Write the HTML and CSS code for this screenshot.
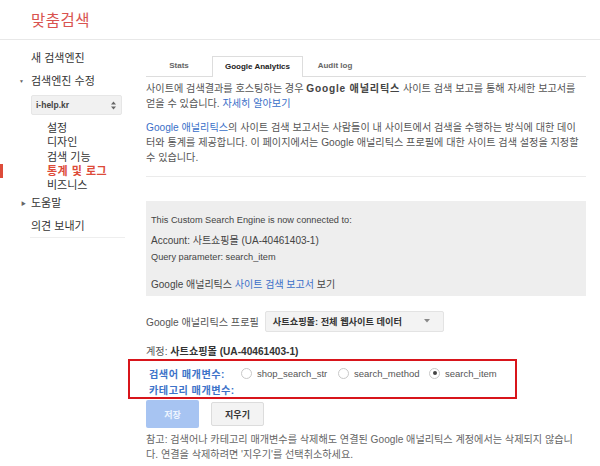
FILE: index.html
```html
<!DOCTYPE html>
<html lang="ko">
<head>
    <meta charset="UTF-8">
    <title>맞춤검색</title>
    <link rel="stylesheet" href="styles.css">
</head>
<body>
<div class="header">
    <span class="logo">맞춤검색</span>
</div>
<div class="page">
    <div class="sidebar">
        <div class="nav-item">새 검색엔진</div>
        <div class="nav-item"><span class="arrow">▼</span>검색엔진 수정</div>
        <div class="engine-select">
            <span>i-help.kr</span>
            <svg width="5" height="9" viewBox="0 0 5 9"><path d="M0 3.5 L2.5 0.5 L5 3.5 Z M0 5.5 L2.5 8.5 L5 5.5 Z" fill="#666"/></svg>
        </div>
        <div class="sub-list">
            <div class="sub-item">설정</div>
            <div class="sub-item">디자인</div>
            <div class="sub-item">검색 기능</div>
            <div class="sub-item active">통계 및 로그</div>
            <div class="sub-item">비즈니스</div>
        </div>
        <div class="nav-item"><span class="arrow right">▶</span>도움말</div>
        <div class="nav-item feedback">의견 보내기</div>
    </div>
    <div class="main">
        <div class="tabs">
            <div class="tab t1">Stats</div>
            <div class="tab t2 selected">Google Analytics</div>
            <div class="tab t3">Audit log</div>
        </div>
        <p class="intro">사이트에 검색결과를 호스팅하는 경우 <b>Google 애널리틱스</b> 사이트 검색 보고를 통해 자세한 보고서를 얻을 수 있습니다. <a href="#">자세히 알아보기</a></p>
        <p class="intro second"><a href="#">Google 애널리틱스</a>의 사이트 검색 보고서는 사람들이 내 사이트에서 검색을 수행하는 방식에 대한 데이터와 통계를 제공합니다. 이 페이지에서는 Google 애널리틱스 프로필에 대한 사이트 검색 설정을 지정할 수 있습니다.</p>
        <div class="divider"></div>
        <div class="connected">
            <div class="c-line latin first">This Custom Search Engine is now connected to:</div>
            <div class="c-line">Account: 사트쇼핑몰 (UA-40461403-1)</div>
            <div class="c-line latin">Query parameter: search_item</div>
            <div class="c-line last">Google 애널리틱스 <a href="#">사이트 검색 보고서</a> 보기</div>
        </div>
        <div class="profile-row">
            <span>Google 애널리틱스 프로필</span>
            <div class="profile-select">
                <span>사트쇼핑몰: 전체 웹사이트 데이터</span>
                <svg width="6" height="4" viewBox="0 0 6 4"><path d="M0 0 L6 0 L3 3.5 Z" fill="#888"/></svg>
            </div>
        </div>
        <div class="account">계정: <b>사트쇼핑몰 (UA-40461403-1)</b></div>
        <div class="params">
            <div class="param-row">
                <span class="param-label">검색어 매개변수:</span>
                <label class="radio r1"><span class="dot"></span>shop_search_str</label>
                <label class="radio r2"><span class="dot"></span>search_method</label>
                <label class="radio"><span class="dot checked"></span>search_item</label>
            </div>
            <div class="param-row">
                <span class="param-label">카테고리 매개변수:</span>
            </div>
        </div>
        <div class="buttons">
            <button class="btn save">저장</button>
            <button class="btn clear">지우기</button>
        </div>
        <p class="note">참고: 검색어나 카테고리 매개변수를 삭제해도 연결된 Google 애널리틱스 계정에서는 삭제되지 않습니<br>다. 연결을 삭제하려면 '지우기'를 선택취소하세요.</p>
    </div>
</div>
</body>
</html>
```

FILE: styles.css
```css
body { margin: 0; font-family: "Liberation Sans", Arial, "Noto Sans CJK KR", sans-serif; font-size: 10.15px; color: #444; background: #fff; }
a { color: #3a6fc8; text-decoration: none; }
p { margin: 0; }

.header { height: 40px; border-bottom: 1px solid #e8e8e8; box-sizing: border-box; padding-left: 31px; display: flex; align-items: center; }
.logo { color: #d9534f; font-size: 15.5px; letter-spacing: 0.5px; margin-top: -1px; }

.page { display: flex; }

/* 왼쪽 메뉴 */
.sidebar { flex: 0 0 146px; padding-top: 7px; font-size: 11px; }
.nav-item { padding-left: 31px; height: 23px; line-height: 23px; color: #333; position: relative; }
.nav-item .arrow { position: absolute; left: 19px; font-size: 5px; color: #666; }
.nav-item .arrow.right { left: 21px; }
.engine-select { margin: 2px 0 0 31px; width: 91px; height: 20px; box-sizing: border-box; background: #f1f1f1; border: 1px solid #e6e6e6; border-radius: 2px; display: flex; align-items: center; justify-content: space-between; padding: 0 5px 0 4px; font-size: 8.5px; font-weight: bold; color: #444; }
.sub-list { padding: 6px 0 0 47px; }
.sub-item { height: 14.25px; line-height: 14.25px; color: #333; }
.sub-item.active { color: #dd4b39; font-weight: bold; letter-spacing: 0.5px; position: relative; }
.sub-item.active::before { content: ""; position: absolute; left: -47px; top: 0; width: 3px; height: 14px; background: #dd4b39; }
.nav-item.feedback { margin-left: 30px; width: 95px; padding-left: 1px; box-sizing: border-box; border-bottom: 1px solid #eee; }

/* 본문 */
.main { flex: 0 0 440px; padding-top: 16px; }
.tabs { display: flex; height: 20px; border-bottom: 1px solid #ddd; }
.tab { font-size: 8px; font-weight: bold; color: #666; line-height: 20px; text-align: center; box-sizing: border-box; }
.t1 { width: 66px; }
.t2 { width: 91px; }
.t3 { width: 64px; }
.tab.selected { color: #222; background: #fff; border: 1px solid #ddd; border-bottom: none; height: 21px; }
.intro { margin: 3.5px 3px 0 0; line-height: 15px; color: #555; }
.intro.second { margin-top: 9px; }
.intro b { color: #444; letter-spacing: 0.8px; }
.divider { border-top: 1px solid #ebebeb; margin-top: 11px; height: 24px; }
.connected { background: #eeeeee; padding: 11px 4px 3px 5px; color: #444; font-size: 10px; }
.c-line { line-height: 16px; }
.c-line.latin { font-size: 9.2px; }
.c-line.first { margin-bottom: 5px; }
.c-line.last { margin-top: 12px; }
.profile-row { display: flex; align-items: center; margin-top: 15px; color: #555; }
.profile-select { margin-left: 6px; width: 179px; height: 21px; box-sizing: border-box; background: #f3f3f3; border: 1px solid #e3e3e3; border-radius: 2px; display: flex; align-items: center; justify-content: space-between; padding: 0 13px 0 7px; font-size: 9.2px; font-weight: bold; color: #333; }
.account { margin-top: 12.5px; line-height: 15px; color: #555; }
.account b { color: #333; }
.params { border: 2px solid #d8151b; margin: 0 69px 0 -18px; padding: 4px 0 0 19px; }
.param-row { display: flex; align-items: center; height: 16px; }
.param-label { color: #3d73c9; font-weight: bold; letter-spacing: 0.5px; width: 92px; }
.radio { display: flex; align-items: center; color: #555; font-size: 9.5px; }
.r1 { width: 97px; }
.r2 { width: 91px; }
.dot { width: 11px; height: 11px; border: 1px solid #c8c8c8; border-radius: 50%; margin-right: 5px; box-sizing: border-box; position: relative; background: #fff; }
.dot.checked::after { content: ""; position: absolute; left: 2.5px; top: 2.5px; width: 4px; height: 4px; border-radius: 50%; background: #444; }
.buttons { display: flex; align-items: center; margin-top: 1px; }
.btn { font-family: inherit; font-size: 9px; font-weight: bold; border-radius: 2px; padding: 0; }
.save { width: 53px; height: 28px; background: #a7c4f2; color: #eef4ff; border: none; }
.clear { margin-left: 12px; width: 53px; height: 24px; background: #f3f3f3; color: #333; border: 1px solid #dcdcdc; }
.note { margin: 3.5px 8px 0 0; line-height: 15px; color: #666; }
```
